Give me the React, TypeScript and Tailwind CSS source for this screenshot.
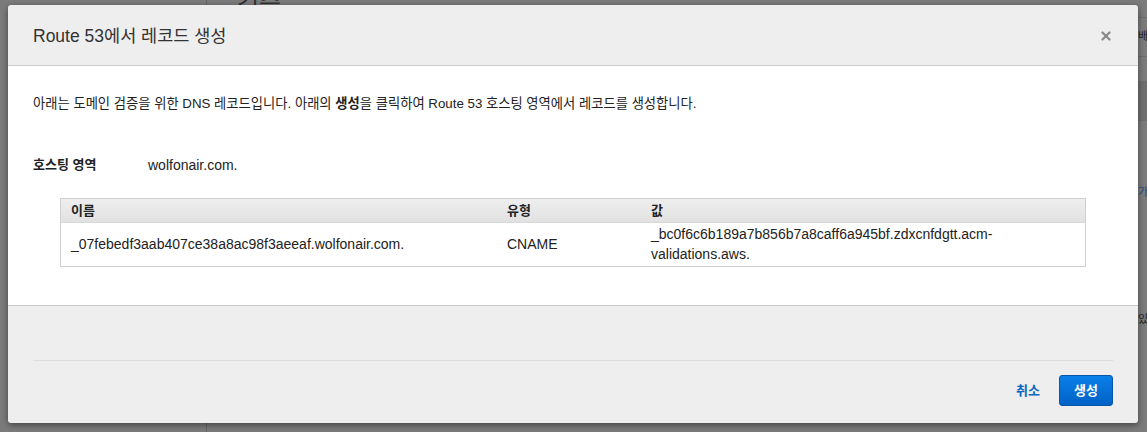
import { X } from 'lucide-react';

const font = { fontFamily: '"Liberation Sans", "Noto Sans CJK KR", sans-serif' };

export default function App() {
    return <div className="relative w-[1147px] h-[432px] overflow-hidden bg-[#7b7b7b]" style={font}>
        {/* dimmed page behind the dialog */}
        <div className="flex h-full">
            <div className="w-[207px] border-r border-[#666]"></div>
            <div className="flex-1 flex flex-col">
                <div className="pl-[30px] -mt-[14px] text-[24px] text-[#333]">검증</div>
            </div>
            <div className="w-[9px] flex flex-col">
                <div className="h-[18px] border-b border-[#6c6c6c]"></div>
                <div className="h-[39px] border-b border-[#6c6c6c] text-[11px] text-[#222] pt-[10px]">배</div>
                <div className="h-[40px] mt-[24px] bg-[#6f6f6f]"></div>
                <div className="mt-[63px] text-[11px] text-[#1a4c86]">가</div>
                <div className="mt-[110px] text-[11px] text-[#222]">있</div>
            </div>
        </div>

        {/* dialog */}
        <div className="absolute left-[8px] top-[5px] w-[1130px] h-[418px] flex flex-col bg-[#eeeeee] rounded-[3px] shadow-[0_2px_6px_rgba(0,0,0,0.45)]">
            <div className="h-[61px] flex items-center justify-between pl-[25px] pr-[25px] border-b border-[#cccccc]">
                <div className="text-[17.5px] text-[#333] pt-[2px]">Route 53에서 레코드 생성</div>
                <X className="w-[14px] h-[14px] text-[#8a8a8a] mt-[2px]" strokeWidth={4} />
            </div>

            <div className="h-[240px] bg-white border-b border-[#c8c8c8] px-[25px] pt-[28px] text-[14px] text-[#222]">
                <div className="text-[13.3px]">아래는 도메인 검증을 위한 DNS 레코드입니다. 아래의 <b>생성</b>을 클릭하여 Route 53 호스팅 영역에서 레코드를 생성합니다.</div>

                <div className="flex mt-[41px]">
                    <div className="w-[115px] font-bold text-[13px]">호스팅 영역</div>
                    <div>wolfonair.com.</div>
                </div>

                <div className="mt-[22px] ml-[27px] w-[1026px] border border-[#cfcfcf]">
                    <div className="grid grid-cols-[436px_144px_1fr] h-[24px] items-center bg-[linear-gradient(#eeeeee,#e2e2e2)] border-b border-[#d8d8d8] font-bold text-[13px]">
                        <div className="pl-[10px]">이름</div>
                        <div className="pl-[10px]">유형</div>
                        <div className="pl-[10px]">값</div>
                    </div>
                    <div className="grid grid-cols-[436px_144px_1fr] h-[43px] items-center leading-[20px]">
                        <div className="pl-[10px]">_07febedf3aab407ce38a8ac98f3aeeaf.wolfonair.com.</div>
                        <div className="pl-[10px]">CNAME</div>
                        <div className="pl-[10px] pr-[40px]">_bc0f6c6b189a7b856b7a8caff6a945bf.zdxcnfdgtt.acm-validations.aws.</div>
                    </div>
                </div>
            </div>

            <div className="flex-1 px-[25px]">
                <div className="mt-[54px] border-t border-[#dcdcdc]"></div>
                <div className="flex justify-end items-center gap-[19px] mt-[14px]">
                    <button type="button" className="text-[13px] font-bold text-[#0b66c2]">취소</button>
                    <button type="button" className="w-[54px] h-[31px] rounded-[3px] border border-[#0a55a6] bg-[linear-gradient(#0a7fe9,#0062c6)] text-white text-[13px] font-bold">생성</button>
                </div>
            </div>
        </div>
    </div>;
}
